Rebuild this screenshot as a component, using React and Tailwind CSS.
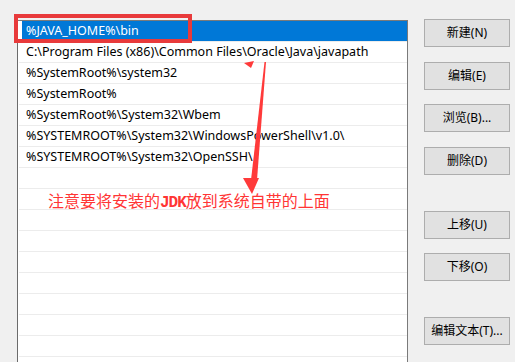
import React from 'react';

const paths = [
  '%JAVA_HOME%\\bin',
  'C:\\Program Files (x86)\\Common Files\\Oracle\\Java\\javapath',
  '%SystemRoot%\\system32',
  '%SystemRoot%',
  '%SystemRoot%\\System32\\Wbem',
  '%SYSTEMROOT%\\System32\\WindowsPowerShell\\v1.0\\',
  '%SYSTEMROOT%\\System32\\OpenSSH\\',
];

const buttons = [
  { label: '新建(N)', gap: 'mt-0' },
  { label: '编辑(E)', gap: 'mt-[15px]' },
  { label: '浏览(B)...', gap: 'mt-[14px]' },
  { label: '删除(D)', gap: 'mt-[15px]' },
  { label: '上移(U)', gap: 'mt-[36px]' },
  { label: '下移(O)', gap: 'mt-[14px]' },
  { label: '编辑文本(T)...', gap: 'mt-[36px]' },
];

const font = { fontFamily: '"Noto Sans", "Noto Sans CJK SC", sans-serif' };

const App = () => {
  const rows = [...paths, ...Array(9).fill('')];

  return (
    <div
      className="relative w-[515px] h-[362px] overflow-hidden bg-[#f0f0f0] flex text-[12px] text-black"
      style={font}
    >
      {/* path list */}
      <div className="ml-[17px] mt-[20px] w-[391px] h-[400px] bg-white border border-[#7a7a7a] border-l-[#6b6b6b] pl-[1px] pr-0 flex flex-col text-[12.5px]">
        {rows.map((p, i) => (
          <div key={i} className="h-[21px] shrink-0 border-b border-[#ececec] flex">
            {i === 0 ? (
              <div className="ml-[3px] flex-1 bg-[#0078d7] text-white flex items-center pl-[4px] leading-none">
                {p}
              </div>
            ) : (
              <div className="flex-1 flex items-center pl-[7px] leading-none whitespace-nowrap">{p}</div>
            )}
          </div>
        ))}
      </div>

      {/* buttons */}
      <div className="ml-[16px] mt-[19px] w-[86px] flex flex-col">
        {buttons.map((b) => (
          <button
            key={b.label}
            className={`${b.gap} h-[28px] w-[86px] bg-[#e1e1e1] border border-[#adadad] flex items-center justify-center leading-none whitespace-nowrap`}
          >
            {b.label}
          </button>
        ))}
      </div>

      {/* annotation: red box */}
      <div className="absolute left-[14px] top-[14px] w-[178px] h-[29px] border-[4px] border-[#e83a3b] pointer-events-none" />

      {/* annotation: arrow */}
      <svg className="absolute left-0 top-0 pointer-events-none" width="515" height="362" viewBox="0 0 515 362">
        <path d="M244 63 L254 61 L251 68 Z" fill="#ff3a3a" />
        <path d="M264.5 62 L266 62 L257 180 L251 180 Z" fill="#ff3a3a" />
        <path d="M243 178 L259 178 L252 194 Z" fill="#ff3a3a" />
      </svg>

      {/* annotation: note */}
      <div
        className="absolute left-[48px] top-[190px] text-[16px] leading-[20px] text-[#ff3535] whitespace-nowrap"
        style={{ fontFamily: '"Noto Sans CJK SC", sans-serif' }}
      >
        注意要将安装的<span style={{ fontFamily: '"Liberation Mono", monospace' }} className="font-bold tracking-[-1px]">JDK</span>放到系统自带的上面
      </div>
    </div>
  );
};

export default App;
